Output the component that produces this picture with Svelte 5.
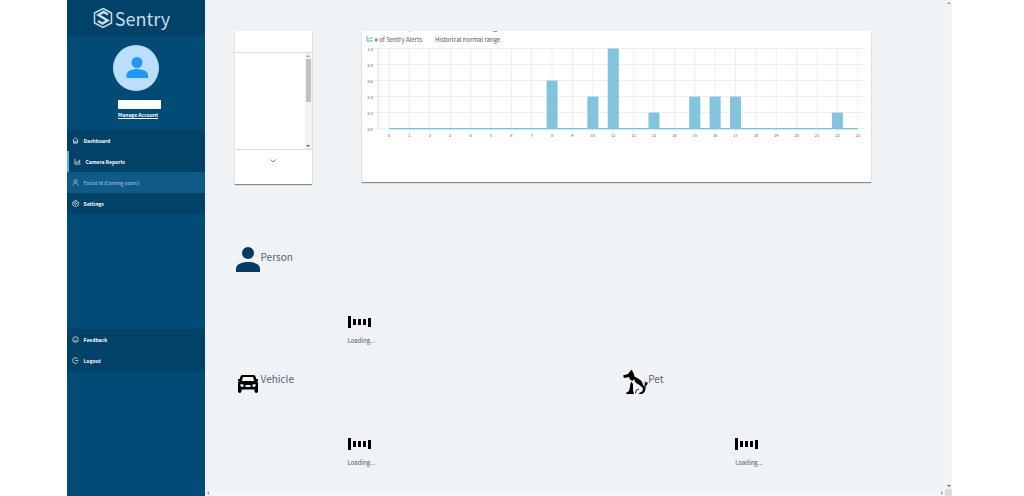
<script lang="ts">
  type Icon = 'home' | 'chart' | 'user' | 'gear' | 'smile' | 'logout';

  interface NavItem {
    label: string;
    icon:  Icon;
    state?: 'active' | 'soon';
  }

  const mainNav: NavItem[] = [
    { label: 'Dashboard', icon: 'home' },
    { label: 'Camera Reports', icon: 'chart', state: 'active' },
    { label: 'Facial Id (Coming soon!)', icon: 'user', state: 'soon' },
    { label: 'Settings', icon: 'gear' },
  ];

  const footNav: NavItem[] = [
    { label: 'Feedback', icon: 'smile' },
    { label: 'Logout', icon: 'logout' },
  ];

  const categories = ['Person', 'Vehicle', 'Pet'];

  // alerts per hour, normalised to the busiest hour
  const alerts = [0, 0, 0, 0, 0, 0, 0, 0, 0.6, 0, 0.4, 1, 0, 0.2, 0, 0.4, 0.4, 0.4, 0, 0, 0, 0, 0.2, 0];
  const ticks  = [0, 0.2, 0.4, 0.6, 0.8, 1];

  const x = (hour: number) => 27 + hour * 20.35;
  const y = (v: number) => 97.5 - v * 80;
</script>

{#snippet icon(name: Icon)}
  <svg class="nav-icon" viewBox="0 0 16 16" aria-hidden="true">
    {#if name === 'home'}
      <path d="M1.5 8 8 2l6.500 6M3.500 7v7h9V7M6.500 14v-4h3v4" />
    {:else if name === 'chart'}
      <path d="M2 2v12h13M6 12V8M9.500 12V6M13 12V4" />
    {:else if name === 'user'}
      <circle cx="8" cy="5" r="3.500" />
      <path d="M2.500 15c0-4 2-6 5.500-6s5.500 2 5.500 6" />
    {:else if name === 'gear'}
      <path d="M6 1.500h4l.5 2 2 1 2 0 .5 3.500-1 1 .5 3-2.500 1-1.500 2H6l-1.500-2L2 12l-.5-3V7L2 4.500l2.500-.5z" />
      <circle cx="8" cy="8" r="2.500" />
    {:else if name === 'smile'}
      <circle cx="8" cy="8" r="6.500" />
      <path d="M5 9c1 3 5 3 6 0M5.500 5.500v1M10.500 5.500v1" />
    {:else}
      <path d="M13 4A6.500 6.500 0 1 0 13 12M7 8h8" />
    {/if}
  </svg>
{/snippet}

{#snippet nav(items: NavItem[], label: string)}
  <nav class="nav" aria-label={label}>
    {#each items as item}
      <a class="nav-item {item.state ?? ''}" href="#top">
        {@render icon(item.icon)}
        <span>{item.label}</span>
      </a>
    {/each}
  </nav>
{/snippet}

{#snippet loader()}
  <div class="loader" role="status">
    <svg width="24" height="14" viewBox="0 0 24 14" aria-hidden="true">
      <path d="M0 1h3v12H0zM5 4h3v6H5zM10 4h3v6h-3zM15 4h3v6h-3zM20 3h3v9h-3z" />
    </svg>
    <span>Loading...</span>
  </div>
{/snippet}

<div class="page">
  <aside class="sidebar">
    <div class="brand">
      <svg width="20" height="22" viewBox="0 0 20 22" aria-hidden="true">
        <path d="M10 1.500 18.500 6v10L10 20.500 1.500 16V6z" />
        <path class="bold" d="M15 7.500 10.500 5 5.500 8l9 5.500-5 3L5 14" />
      </svg>
      <span>Sentry</span>
    </div>

    <div class="profile">
      <svg class="avatar" viewBox="0 0 46 46" aria-hidden="true">
        <circle cx="23" cy="23" r="23" fill="#bbdefb" />
        <circle cx="24" cy="17.500" r="5.500" fill="#2196f3" />
        <path d="M13.500 33v-3c0-4 6-6 10.500-6s11 2 11 6v3z" fill="#2196f3" />
      </svg>
      <div class="user-name"></div>
      <a class="manage" href="#account">Manage Account</a>
    </div>

    {@render nav(mainNav, 'Main')}
    <div class="spacer"></div>
    {@render nav(footNav, 'Account')}
    <div class="spacer last"></div>
  </aside>

  <main class="content" id="top">
    <div class="cards">
      <section class="card picker">
        <div class="picker-head"></div>
        <div class="picker-list">
          <div class="track">
            <span class="arrow up"></span>
            <span class="thumb"></span>
            <span class="arrow down"></span>
          </div>
        </div>
        <button class="more" aria-label="Next">
          <svg width="6" height="4" viewBox="0 0 6 4"><path d="M.5.5 3 3 5.500.5" /></svg>
        </button>
      </section>

      <section class="card chart">
        <div class="legend">
          <svg width="8" height="6" viewBox="0 0 8 6" aria-hidden="true">
            <path d="M1 0v5h6M2 3.500l1.500-1.500 1 1 2-2" />
          </svg>
          <span># of Sentry Alerts</span>
          <span class="range">Historical normal range</span>
        </div>
        <svg class="plot" viewBox="0 0 509 151" role="img" aria-label="Alerts by hour">
          <path class="title-edge" d="M47 0h1v1h-1zM131 0h4v1h-4z" />
          {#each ticks as t}
            <line class="grid" x1="13" x2="504" y1={y(t)} y2={y(t)} />
            <text x="11" y={y(t) + 2} text-anchor="end">{t.toFixed(1)}</text>
          {/each}
          {#each alerts as value, hour}
            <line class="grid" x1={x(hour)} x2={x(hour)} y1="17" y2="101" />
            <text x={x(hour)} y="106" text-anchor="middle">{hour}</text>
          {/each}
          <line class="axis" x1="16" x2="16" y1="17" y2="98" />
          <line class="base" x1={x(0)} x2={x(23)} y1="97.5" y2="97.5" />
          {#each alerts as value, hour}
            {#if value > 0}
              <rect x={x(hour) - 5.5} y={y(value)} width="11" height={value * 80} />
            {/if}
          {/each}
        </svg>
      </section>
    </div>

    <div class="categories">
      {#each categories as name}
        <section class="category" class:wide={name === 'Person'}>
          <h2>
            <svg width="26" height="28" viewBox="0 0 26 28" aria-hidden="true">
              {#if name === 'Person'}
                <g fill="#033c69">
                  <circle cx="13" cy="8" r="6" />
                  <path d="M1 27v-3c0-5 6-7 12-7s12 2 12 7v3z" />
                </g>
              {:else if name === 'Vehicle'}
                <path
                  fill-rule="evenodd"
                  d="M8 8h10c1.500 0 2.300.5 2.700 2l1.300 4 1 1.500V24c0 2.500-3.500 2.500-3.500 0v-1.500h-13V24c0 2.500-3.500 2.500-3.500 0v-8.500L4 14l1.300-4C5.700 8.500 6.500 8 8 8zM8 10l-1.200 4h12.400L18 10zM5.500 17v2.500l3 .5v-2.500zM20.500 17v2.500l-3 .5v-2.500zM10.500 18v2h5v-2z"
                />
                <path d="M3 12h3v2H3zM20 12h3v2h-3z" />
              {:else}
                <path d="M1 8.500 6 7l3.500-4.500L11.500 6l1 3.500c3 1.500 6 3 7.500 5.500l2 5-1 1.500c-2-3-5-4.500-7.500-6L12 12l-1.500 2-2.500-1.500-1-2.500-5 1z" />
                <path d="M9 14.500l2 2.500v6l1 4H4c0-2 2-2 3-3 1-3 1-6 2-9.500zM23 13.500l1 2.500 2-1-1 3-1.500 1c.5 4-1 8-4.500 8h-2c0-1.500 2-2 3-2.500 1-1.500 1-3 1-4.500l1.500-1z" />
                <path d="M13.500 26.500 14.500 23l2.500-1" fill="none" stroke="#222" />
              {/if}
            </svg>
            {name}
          </h2>
          {@render loader()}
        </section>
      {/each}
    </div>
  </main>

  <div class="vbar"><span class="arrow up"></span><span class="arrow down"></span></div>
  <div class="hbar"><span class="arrow left"></span><span class="arrow right"></span></div>
  <div class="corner"></div>
</div>

<style>
  :global(body) {
    margin: 0;
    background: #fff;
  }

  .page {
    display: grid;
    grid-template-columns: 138px 1fr 7px;
    grid-template-rows: 1fr 7px;
    min-height: 100vh;
    margin: 0 7% 0 6.5%;
    box-sizing: border-box;
    font-family: 'Noto Sans CJK JP', 'Noto Sans', sans-serif;
    font-size: 6px;
    color: #555;
    background: #eff3f6;
  }

  /* sidebar */
  .sidebar {
    grid-row: 1 / 3;
    display: flex;
    flex-direction: column;
    background: #024b77;
    color: #fff;
  }

  .brand {
    display: flex;
    align-items: center;
    justify-content: center;
    gap: 2px;
    height: 36px;
    padding-right: 8px;
    box-sizing: border-box;
    background: #024168;
    font-size: 18px;
    line-height: 24px;
    font-weight: 400;
    color: #c6dcea;
  }

  .brand path {
    fill: none;
    stroke: #c6dcea;
    stroke-width: 1.5;
  }

  .brand .bold {
    stroke-width: 2.5;
  }

  .profile {
    display: flex;
    flex-direction: column;
    align-items: center;
    height: 94px;
    padding: 9px 0 0;
    box-sizing: border-box;
  }

  .avatar {
    width: 46px;
    height: 46px;
  }

  .user-name {
    width: 43px;
    height: 9px;
    margin: 9px 0 1px 7px;
    background: #fff;
  }

  .manage {
    margin-left: 5px;
    color: #fff;
    font-weight: 700;
    font-size: 5px;
    line-height: 10px;
  }

  .nav {
    background: #024168;
  }

  .nav-item {
    display: flex;
    align-items: center;
    gap: 5px;
    height: 21px;
    padding-left: 5px;
    box-sizing: border-box;
    color: #fff;
    font-size: 5px;
    font-weight: 700;
    text-decoration: none;
  }

  .nav-item.active {
    border-left: 2px solid #5cb3df;
  }

  .nav-item.soon {
    background: #105a87;
    color: #b5d0e2;
    font-weight: 400;
  }

  .nav-icon {
    width: 7px;
    height: 7px;
    fill: none;
    stroke: currentColor;
    stroke-width: 1.5;
  }

  .spacer {
    flex: 11;
  }

  .spacer.last {
    flex: 12;
  }

  /* content */
  .content {
    padding: 31px 0 0 30px;
  }

  .cards {
    display: flex;
    align-items: flex-start;
    gap: 50px;
    padding-right: 74px;
  }

  .card {
    background: #fff;
    box-shadow: 0 1px 1px #888;
  }

  .picker {
    width: 77px;
    flex-shrink: 0;
  }

  .picker-head {
    height: 21px;
    border-bottom: 1px solid #ddd;
  }

  .picker-list {
    display: flex;
    justify-content: flex-end;
    height: 96px;
    border-bottom: 1px solid #ddd;
  }

  .track {
    display: flex;
    flex-direction: column;
    align-items: center;
    gap: 2px;
    width: 7px;
    padding: 2px 0;
    box-sizing: border-box;
    background: #f1f1f1;
  }

  .thumb {
    width: 5px;
    height: 43px;
    background: #c1c1c1;
  }

  .arrow {
    width: 0;
    height: 0;
    border: 2px solid transparent;
  }

  .arrow.up {
    border-top: 0;
    border-bottom-color: #999;
  }

  .arrow.down {
    margin-top: auto;
    border-bottom: 0;
    border-top-color: #666;
  }

  .arrow.left {
    border-left: 0;
    border-right-color: #999;
  }

  .arrow.right {
    border-right: 0;
    border-left-color: #999;
  }

  .more {
    display: flex;
    justify-content: center;
    width: 100%;
    height: 34px;
    padding: 9px 0 0;
    border: 0;
    background: none;
  }

  .more path {
    fill: none;
    stroke: #888;
  }

  .chart {
    display: grid;
    flex: 1;
    min-width: 0;
  }

  .legend,
  .plot {
    grid-area: 1 / 1;
  }

  .legend {
    display: flex;
    align-self: start;
    gap: 1px;
    padding: 4px;
    line-height: 9px;
  }

  .legend svg {
    flex-shrink: 0;
    margin-top: 1px;
  }

  .legend path {
    fill: none;
    stroke: #55aecb;
  }

  .range {
    margin-left: 12px;
  }

  .plot {
    display: block;
    width: 100%;
  }

  .plot text {
    font-size: 4px;
    fill: #555;
  }

  .plot rect {
    fill: #82c4de;
  }

  .plot .title-edge {
    fill: #999;
  }

  .grid {
    stroke: #eee;
  }

  .axis {
    stroke: #ddd;
  }

  .base {
    stroke: #4db3c8;
  }

  .categories {
    display: grid;
    grid-template-columns: 6fr 5fr;
    margin-top: 61px;
  }

  .category {
    height: 122px;
  }

  .category.wide {
    grid-column: 1 / 3;
  }

  h2 {
    display: flex;
    margin: 0;
    font-size: 10px;
    line-height: 24px;
    font-weight: 400;
    color: #5b5b7b;
  }

  .loader {
    display: flex;
    flex-direction: column;
    gap: 7px;
    padding: 42px 0 0 113px;
    line-height: 9px;
  }

  /* scrollbars */
  .vbar,
  .hbar,
  .corner {
    background: #f3f4f5;
  }

  .vbar,
  .hbar {
    display: flex;
    align-items: center;
    justify-content: space-between;
    padding: 2px;
    box-sizing: border-box;
  }

  .vbar {
    flex-direction: column;
  }

  .corner {
    background: #ddd;
  }
</style>
